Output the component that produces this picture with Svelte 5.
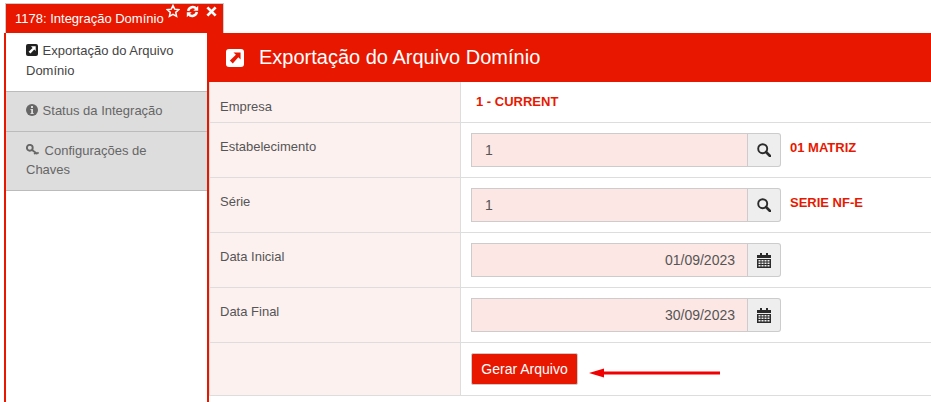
<script>
  const menu = [
    { label: 'Exportação do Arquivo Domínio', icon: 'export', active: true },
    { label: 'Status da Integração', icon: 'info' },
    { label: 'Configurações de Chaves', icon: 'key' }
  ];

  const rows = [
    { label: 'Empresa', kind: 'text', value: '1 - CURRENT' },
    { label: 'Estabelecimento', kind: 'lookup', value: '1', desc: '01 MATRIZ' },
    { label: 'Série', kind: 'lookup', value: '1', desc: 'SERIE NF-E' },
    { label: 'Data Inicial', kind: 'date', value: '01/09/2023' },
    { label: 'Data Final', kind: 'date', value: '30/09/2023' }
  ];
</script>

{#snippet search()}
  <svg width="14" height="14" viewBox="0 0 14 14" fill="none" stroke="#2b2b2b">
    <circle cx="5.700" cy="5.700" r="4.500" stroke-width="1.900" />
    <path d="M9 9l4 4" stroke-width="2.600" stroke-linecap="round" />
  </svg>
{/snippet}

{#snippet calendar()}
  <svg width="14" height="15" viewBox="0 0 14 15" fill="#2b2b2b">
    <path d="M0 2h3V0h2v2h4V0h2v2h3v3H0z" />
    <path fill-rule="evenodd" d="M0 6h14v9H0zM1.500 7v1.500h2V7zm3 0v1.500h2V7zm3 0v1.500h2V7zm3 0v1.500h2V7zm-9 2.500V11h2V9.500zm3 0V11h2V9.500zm3 0V11h2V9.500zm3 0V11h2V9.500zm-9 2.500v1.500h2V12zm3 0v1.500h2V12zm3 0v1.500h2V12zm3 0v1.500h2V12z" />
  </svg>
{/snippet}

{#snippet exportIcon(bg, fg, size)}
  <svg width={size} height={size} viewBox="0 0 12 12">
    <rect width="12" height="12" rx="2" fill={bg} />
    <path d="M5 2.300h4.700V7L8.200 5.500 4.500 9.600 2.600 7.700 6.600 3.900z" fill={fg} />
  </svg>
{/snippet}

<div class="page">
  <div class="tabbar">
    <div class="tab">
      <span class="tab-title">1178: Integração Domínio</span>
      <span class="tab-icons">
        <svg class="star" width="14" height="14" viewBox="0 0 24 24" fill="none" stroke="#fff" stroke-width="2.600">
          <path d="M12 2.500l2.900 6.300 6.900.8-5.100 4.700 1.400 6.800-6.100-3.400-6.100 3.400 1.400-6.800-5.100-4.700 6.900-.8z" />
        </svg>
        <svg width="13" height="13" viewBox="0 0 24 24" fill="none" stroke="#fff" stroke-width="4.500">
          <path d="M4 11a8.500 8.500 0 0 1 15-4" />
          <path d="M20 13a8.500 8.500 0 0 1-15 4" />
          <path d="M22.500 1.500v9h-9z" fill="#fff" stroke="none" />
          <path d="M1.500 22.500v-9h9z" fill="#fff" stroke="none" />
        </svg>
        <svg width="11" height="11" viewBox="0 0 12 12" stroke="#fff" stroke-width="3">
          <path d="M1.500 1.500l9 9M10.500 1.500l-9 9" />
        </svg>
      </span>
    </div>
  </div>

  <div class="main">
    <nav class="side">
      {#each menu as item}
        <div class="item" class:active={item.active}>
          {#if item.icon === 'export'}
            <span class="mi">{@render exportIcon('#222', '#fff', 12)}</span>
          {:else if item.icon === 'info'}
            <svg class="mi" width="12" height="12" viewBox="0 0 12 12">
              <circle cx="6" cy="6" r="6" fill="#666" />
              <rect x="5" y="2" width="2" height="2" fill="#ddd" />
              <path d="M4.500 5h2.500v4h.7v1H4.500V9h.7V6h-.7z" fill="#ddd" />
            </svg>
          {:else}
            <svg class="mi key" width="13" height="12" viewBox="0 0 13 12" fill="none" stroke="#666">
              <circle cx="3.800" cy="3.800" r="2.900" stroke-width="1.900" />
              <path d="M6 6l5.500 4M9.500 8.500l-1.200 1.700M11.500 9.500l1-1.200" stroke-width="1.800" />
            </svg>
          {/if}
          {item.label}
        </div>
      {/each}
    </nav>

    <section class="panel">
      <header class="head">
        {@render exportIcon('#fff', '#e81800', 18)}
        <h1>Exportação do Arquivo Domínio</h1>
      </header>

      {#each rows as row}
        <div class="row" class:short={row.kind === 'text'}>
          <div class="label">{row.label}</div>
          <div class="field">
            {#if row.kind === 'text'}
              <strong class="value">{row.value}</strong>
            {:else}
              <div class="group">
                <div class="input" class:right={row.kind === 'date'}>{row.value}</div>
                <div class="addon">
                  {#if row.kind === 'lookup'}
                    {@render search()}
                  {:else}
                    {@render calendar()}
                  {/if}
                </div>
              </div>
              {#if row.desc}
                <strong class="desc">{row.desc}</strong>
              {/if}
            {/if}
          </div>
        </div>
      {/each}

      <div class="row last">
        <div class="label"></div>
        <div class="field">
          <button type="button">Gerar Arquivo</button>
          <svg class="arrow" width="132" height="10" viewBox="0 0 132 10">
            <path d="M0 5L15 .5v3h116v3H15v3z" fill="#f00000" />
          </svg>
        </div>
      </div>
    </section>
  </div>
</div>

<style>
  :global(body) {
    margin: 0;
    background: #fff;
    overflow: hidden;
  }

  .page {
    width: 931px;
    height: 402px;
    overflow: hidden;
    font-family: "Liberation Sans", Arial, sans-serif;
    font-size: 13px;
    color: #555;
  }

  .tabbar {
    height: 30px;
    padding: 3px 0 0 5px;
  }

  .tab {
    width: 219px;
    height: 30px;
    box-sizing: border-box;
    background: #e81800;
    border: 1px solid #ccc;
    border-bottom: none;
    color: #fff;
    display: flex;
    position: relative;
  }

  .tab-title {
    margin: 7px 0 0 9px;
    white-space: nowrap;
  }

  .tab-icons {
    position: absolute;
    top: 0;
    right: 6px;
    display: flex;
    gap: 7px;
    align-items: center;
    height: 14px;
  }

  .star {
    margin-right: -1px;
  }

  .main {
    display: flex;
  }

  .side {
    width: 203px;
    height: 369px;
    margin-left: 4px;
    border-left: 2px solid #e81800;
    box-sizing: border-box;
    background: #fff;
  }

  .item {
    background: #ddd;
    color: #666;
    padding: 10px 25px 10.500px 20px;
    line-height: 18.500px;
    border-bottom: 1px solid #bbb;
    width: 201px;
    box-sizing: border-box;
  }

  .item.active {
    background: #fff;
    color: #444;
    height: 59px;
    padding-top: 9px;
  }

  .mi {
    display: inline-block;
    vertical-align: -1px;
    margin-right: 1px;
  }

  .key {
    margin-right: 2px;
  }

  .panel {
    flex: 1;
    border-left: 2px solid #e81800;
  }

  .head {
    height: 49px;
    background: #e81800;
    display: flex;
    align-items: center;
    gap: 15px;
    padding-left: 19px;
    margin-left: -2px;
    color: #fff;
  }

  h1 {
    margin: 0;
    font-size: 20px;
    font-weight: 400;
  }

  .row {
    display: flex;
    height: 55px;
    border-bottom: 1px solid #ddd;
    box-sizing: border-box;
  }

  .row.short {
    height: 41px;
  }

  .row.last {
    height: 53px;
  }

  .label {
    width: 252px;
    box-sizing: border-box;
    flex: none;
    background: #fdf1f0;
    border-right: 1px solid #ddd;
    border-left: 1px solid #ddd;
    padding: 16px 0 0 10px;
    line-height: 16px;
  }

  .short .label {
    padding-top: 17px;
  }

  .field {
    display: flex;
    align-items: flex-start;
    padding: 10px 0 0 10px;
  }

  .short .field {
    padding: 12px 0 0 15px;
  }

  .value,
  .desc {
    color: #e81800;
    font-size: 13px;
    line-height: 16px;
    font-weight: 700;
  }

  .desc {
    margin: 7px 0 0 9px;
  }

  .group {
    display: flex;
    width: 310px;
    height: 34px;
  }

  .input {
    flex: 1;
    box-sizing: border-box;
    background: #fce7e4;
    border: 1px solid #ccc;
    padding: 7px 12px 7px 13px;
    line-height: 18px;
    font-size: 14px;
  }

  .input.right {
    text-align: right;
  }

  .addon {
    width: 33px;
    box-sizing: border-box;
    background: #eee;
    border: 1px solid #ccc;
    border-left: none;
    border-radius: 0 3px 3px 0;
    display: flex;
    align-items: center;
    justify-content: center;
  }

  button {
    width: 107px;
    height: 32px;
    background: #e81800;
    color: #fff;
    border: 1px solid #ccc;
    border-radius: 2px;
    font: 14px "Liberation Sans", Arial, sans-serif;
    padding: 0;
  }

  .arrow {
    margin: 15px 0 0 11px;
  }
</style>
